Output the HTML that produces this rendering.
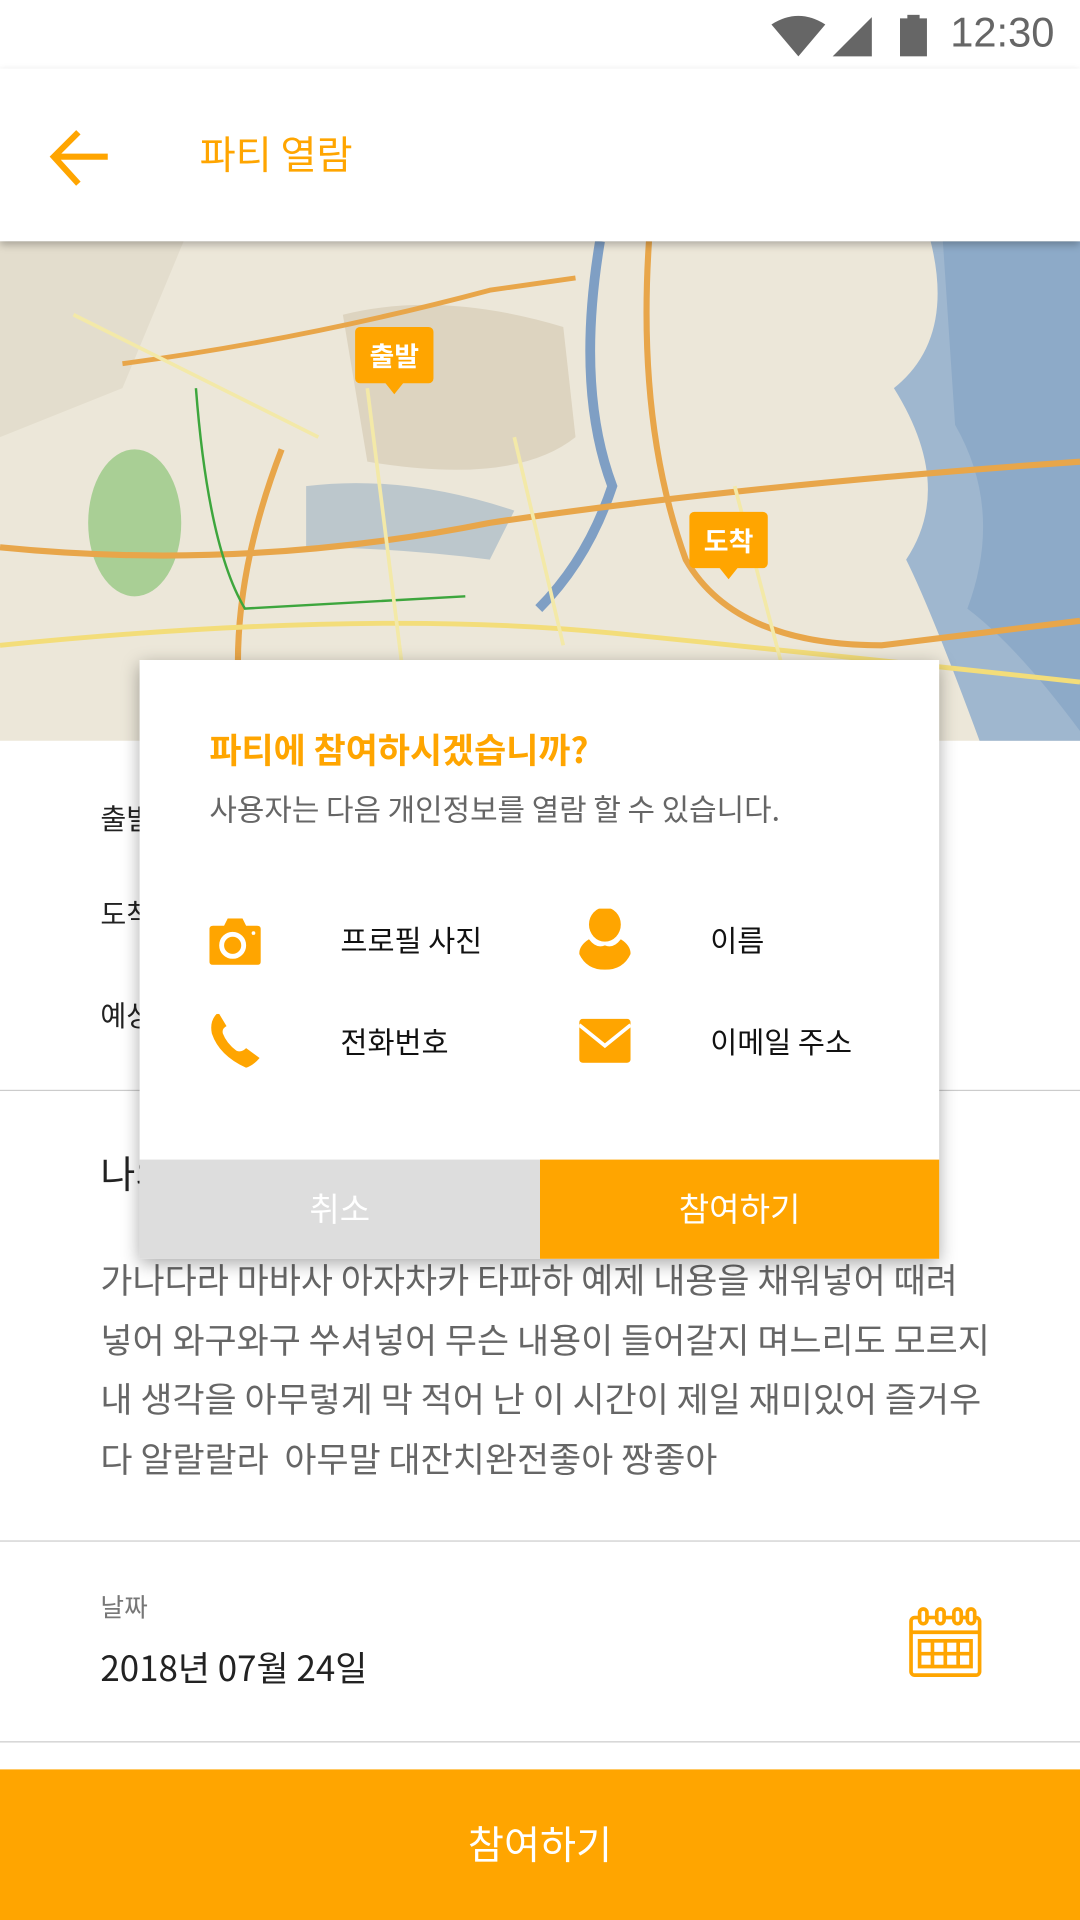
<!DOCTYPE html>
<html><head><meta charset="utf-8"><style>
html,body{margin:0;padding:0;width:1080px;height:1920px;overflow:hidden;background:#fff}
#w{position:absolute;left:0;top:0;width:882px;height:1568px;transform:scale(1.2245);transform-origin:0 0;font-family:"Liberation Sans","Noto Sans CJK KR",sans-serif;background:#fff}
.k{font-family:"Noto Sans CJK KR",sans-serif}
.a{position:absolute;white-space:nowrap}
.or{color:#FFA500}
.line{position:absolute;left:0;width:882px;height:1px;background:#ccc}
</style></head><body><div id="w">
<div class="a" style="left:0;top:0;width:882px;height:56px;background:#fff"></div>
<svg class="a" style="left:628px;top:12px" width="100" height="36" viewBox="0 0 100 36">
<path d="M2 8 Q24 -6 46 8 L24 34 Z" fill="#666"/>
<path d="M52 34 L84 2 L84 34 Z" fill="#666"/>
</svg>
<svg class="a" style="left:734px;top:12px" width="24" height="36"><rect x="1" y="3" width="22" height="31" fill="#666"/><rect x="7" y="0" width="10" height="4" fill="#666"/></svg>
<div class="a" style="left:776px;top:8px;font-size:34px;color:#666">12:30</div>
<div class="a" style="left:0;top:56px;width:882px;height:141px;background:#fff;box-shadow:0 3px 6px rgba(0,0,0,.25);z-index:3"></div>
<svg class="a" style="left:38px;top:104px;z-index:4" width="56" height="50" viewBox="0 0 56 50"><path d="M50 24 H8 M26 4 L6 24 L26 46" stroke="#FFA500" stroke-width="5" fill="none"/></svg>
<div class="a or k" style="left:163px;top:102px;font-size:32px;z-index:4">파티 열람</div>
<svg class="a" style="left:0;top:197px" width="882" height="408" viewBox="0 0 882 408">
<rect width="882" height="408" fill="#ece7d9"/>
<path d="M280 60 Q360 40 460 70 L470 160 Q420 200 300 180 Z" fill="#ddd4c0"/>
<path d="M0 0 H150 L100 120 L0 160Z" fill="#e3ddcd"/>
<path d="M760 0 H882 V408 H800 Q760 300 740 260 Q780 200 730 120 Q780 80 760 0Z" fill="#9fb7cf"/>
<path d="M770 0 H882 V400 Q830 330 790 300 Q820 220 780 150Z" fill="#8daac8"/>
<ellipse cx="110" cy="230" rx="38" ry="60" fill="#a9cf95"/>
<path d="M250 200 Q330 190 420 220 L400 260 Q320 250 250 250Z" fill="#bcc7cc"/>
<path d="M490 0 Q470 120 500 200 Q480 260 440 300" stroke="#7f9fc4" stroke-width="8" fill="none"/>
<path d="M0 250 Q200 270 400 230 Q600 200 882 180" stroke="#e8a64a" stroke-width="5" fill="none"/>
<path d="M230 170 Q180 300 200 408" stroke="#e8a64a" stroke-width="5" fill="none"/>
<path d="M530 0 Q520 150 560 260 Q600 330 720 330 L882 310" stroke="#e8a64a" stroke-width="5" fill="none"/>
<path d="M100 100 Q250 80 400 40 L470 30" stroke="#e8a64a" stroke-width="4" fill="none"/>
<path d="M0 330 Q300 300 500 320 T882 360" stroke="#f3dd7a" stroke-width="4" fill="none"/>
<path d="M160 120 Q170 250 200 300 L380 290" stroke="#3da63d" stroke-width="2" fill="none"/>
<path d="M300 120 L330 360 M420 160 L460 330 M600 200 L650 390 M60 60 L260 160" stroke="#f3e9a8" stroke-width="3" fill="none"/>
</svg>
<div class="a k" style="left:290px;top:267px;width:64px;height:46px;background:#FFA500;border-radius:4px;color:#fff;font-size:22px;font-weight:bold;text-align:center;line-height:46px">출발</div>
<div class="a" style="left:314px;top:312px;border:8px solid transparent;border-top:10px solid #FFA500"></div>
<div class="a k" style="left:563px;top:418px;width:64px;height:46px;background:#FFA500;border-radius:4px;color:#fff;font-size:22px;font-weight:bold;text-align:center;line-height:46px">도착</div>
<div class="a" style="left:587px;top:463px;border:8px solid transparent;border-top:10px solid #FFA500"></div>
<div class="a k" style="left:82px;top:650px;font-size:23px;color:#222">출발</div>
<div class="a k" style="left:82px;top:728px;font-size:23px;color:#222">도착</div>
<div class="a k" style="left:82px;top:811px;font-size:23px;color:#222">예상</div>
<div class="line" style="top:890px"></div>
<div class="a k" style="left:82px;top:934px;font-size:31px;color:#222">나의</div>
<div class="a k" style="left:82px;top:1021px;font-size:28.5px;color:#666;line-height:48.5px">가나다라 마바사 아자차카 타파하 예제 내용을 채워넣어 때려<br>넣어 와구와구 쑤셔넣어 무슨 내용이 들어갈지 며느리도 모르지<br>내 생각을 아무렇게 막 적어 난 이 시간이 제일 재미있어 즐거우<br>다 알랄랄라&nbsp; 아무말 대잔치완전좋아 짱좋아</div>
<div class="line" style="top:1258px"></div>
<div class="a k" style="left:82px;top:1297px;font-size:21px;color:#777">날짜</div>
<div class="a k" style="left:82px;top:1341px;font-size:28.5px;color:#222">2018년 07월 24일</div>
<svg class="a" style="left:742px;top:1311px" width="60" height="60" viewBox="0 0 60 60" fill="none" stroke="#FFA500" stroke-width="3">
<rect x="2" y="10" width="56" height="47" rx="3"/><line x1="2" y1="22" x2="58" y2="22"/>
<rect x="9" y="3" width="6" height="12" rx="3" fill="#fff"/><rect x="23" y="3" width="6" height="12" rx="3" fill="#fff"/><rect x="37" y="3" width="6" height="12" rx="3" fill="#fff"/><rect x="48" y="3" width="6" height="12" rx="3" fill="#fff"/>
<rect x="9" y="29" width="42" height="21"/><line x1="9" y1="39.5" x2="51" y2="39.5"/><line x1="19.5" y1="29" x2="19.5" y2="50"/><line x1="30" y1="29" x2="30" y2="50"/><line x1="40.5" y1="29" x2="40.5" y2="50"/>
</svg>
<div class="line" style="top:1422px"></div>
<div class="a k" style="left:0;top:1445px;width:882px;height:123px;background:#FFA500;color:#fff;font-size:32px;text-align:center;line-height:120px">참여하기</div>
<div class="a k" style="left:114px;top:539px;width:653px;height:489px;background:#fff;box-shadow:0 4px 14px rgba(0,0,0,.35);z-index:5">
<div class="a or" style="left:57px;top:52px;font-size:28.5px;font-weight:bold">파티에 참여하시겠습니까?</div>
<div class="a" style="left:57px;top:104px;font-size:24.4px;color:#666">사용자는 다음 개인정보를 열람 할 수 있습니다.</div>
<svg class="a" style="left:57px;top:211px" width="42" height="38" viewBox="0 0 42 38"><path d="M3 6 H12 L15 0 H27 L30 6 H39 Q42 6 42 9 V35 Q42 38 39 38 H3 Q0 38 0 35 V9 Q0 6 3 6Z" fill="#FFA500"/><circle cx="19" cy="22" r="9" fill="none" stroke="#fff" stroke-width="4"/><circle cx="36" cy="12" r="1.5" fill="#fff"/></svg>
<div class="a" style="left:164px;top:210px;font-size:24px;color:#111">프로필 사진</div>
<svg class="a" style="left:359px;top:203px" width="42" height="50" viewBox="0 0 42 50"><ellipse cx="21" cy="13" rx="13" ry="14" fill="#FFA500"/><path d="M8 25 Q14 33 21 30 Q28 33 34 25 Q42 30 42 37 Q36 50 21 50 Q6 50 0 37 Q0 30 8 25Z" fill="#FFA500"/></svg>
<div class="a" style="left:466px;top:210px;font-size:24px;color:#111">이름</div>
<svg class="a" style="left:57px;top:289px" width="42" height="44" viewBox="0 0 42 44"><path d="M6 0 Q0 6 2 16 Q8 34 30 44 Q36 42 41 36 L30 28 Q26 32 22 30 Q14 24 11 16 Q10 12 14 10 L8 0Z" fill="#FFA500"/></svg>
<div class="a" style="left:164px;top:293px;font-size:24px;color:#111">전화번호</div>
<svg class="a" style="left:359px;top:293px" width="42" height="36" viewBox="0 0 42 36"><rect width="42" height="36" rx="3" fill="#FFA500"/><path d="M0 5 L21 22 L42 5" stroke="#fff" stroke-width="3" fill="none"/></svg>
<div class="a" style="left:466px;top:293px;font-size:24px;color:#111">이메일 주소</div>
<div class="a" style="left:0;top:408px;width:327px;height:81px;background:#ddd;color:#fff;font-size:27px;text-align:center;line-height:78px">취소</div>
<div class="a" style="left:327px;top:408px;width:326px;height:81px;background:#FFA500;color:#fff;font-size:27px;text-align:center;line-height:78px">참여하기</div>
</div>
</div></body></html>
